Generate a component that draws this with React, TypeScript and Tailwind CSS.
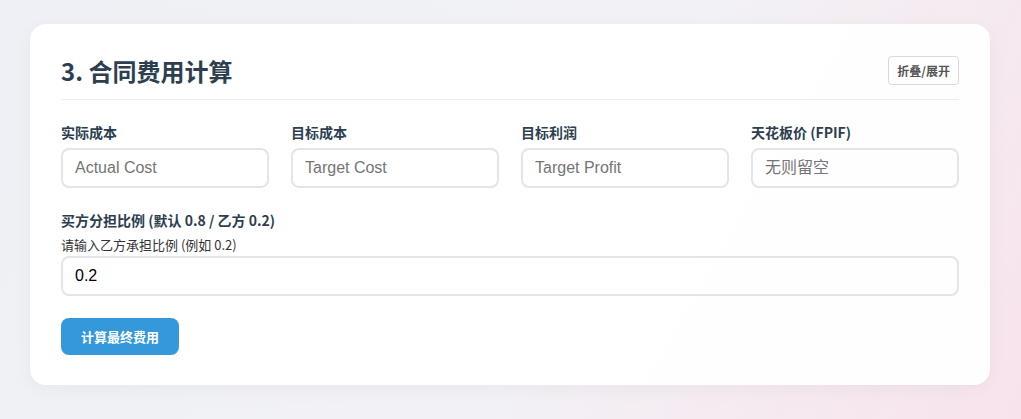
export default function App() {
  const fields = [
    { label: "实际成本", placeholder: "Actual Cost" },
    { label: "目标成本", placeholder: "Target Cost" },
    { label: "目标利润", placeholder: "Target Profit" },
    { label: "天花板价 (FPIF)", placeholder: "无则留空" },
  ];

  const labelFont = { fontFamily: '"Noto Sans CJK SC", "Noto Sans", sans-serif' };
  const inputFont = { fontFamily: '"Liberation Sans", Arial, "Noto Sans CJK SC", sans-serif' };

  return (
    <div className="min-h-[419px] w-full bg-[linear-gradient(120deg,#eef0f5_0%,#f2f2f6_55%,#f8e3ec_100%)] px-[30px] pt-[24px] pb-[34px]" style={labelFont}>
      <div className="w-[960px] rounded-[16px] bg-white/95 px-[31px] pt-[30px] pb-[30px] shadow-[0_4px_20px_rgba(0,0,0,0.04)]">
        {/* header */}
        <div className="flex items-center justify-between border-b border-[#eceef1] pb-[12px] mb-[22px]">
          <h2 className="text-[24px] leading-[33px] font-bold text-[#2c3e50]">3. 合同费用计算</h2>
          <button className="h-[29px] rounded-[4px] border border-[#d9d9d9] bg-white px-[8px] text-[12px] font-bold text-[#555]">
            折叠/展开
          </button>
        </div>

        {/* cost inputs */}
        <div className="grid grid-cols-4 gap-[22px]">
          {fields.map((f) => (
            <div key={f.label}>
              <label className="block text-[14px] leading-[20px] font-bold text-[#2c3e50] mb-[6px]">{f.label}</label>
              <input
                type="text"
                placeholder={f.placeholder}
                className="h-[40px] w-full rounded-[8px] border-2 border-[#e3e5e8] px-[12px] text-[16px] text-black placeholder:text-[#757575] outline-none"
                style={inputFont}
              />
            </div>
          ))}
        </div>

        {/* ratio */}
        <div className="mt-[22px]">
          <label className="block text-[14px] leading-[20px] font-bold text-[#2c3e50] mb-[6px]">
            买方分担比例 (默认 0.8 / 乙方 0.2)
          </label>
          <p className="text-[13px] leading-[18px] text-[#333] mb-[2px]">请输入乙方承担比例 (例如 0.2)</p>
          <input
            type="text"
            defaultValue="0.2"
            className="h-[40px] w-full rounded-[8px] border-2 border-[#e3e5e8] px-[12px] text-[16px] text-black outline-none"
            style={inputFont}
          />
        </div>

        <button className="mt-[22px] h-[37px] rounded-[8px] bg-[#3498db] px-[20px] text-[13px] font-bold text-white">
          计算最终费用
        </button>
      </div>
    </div>
  );
}
